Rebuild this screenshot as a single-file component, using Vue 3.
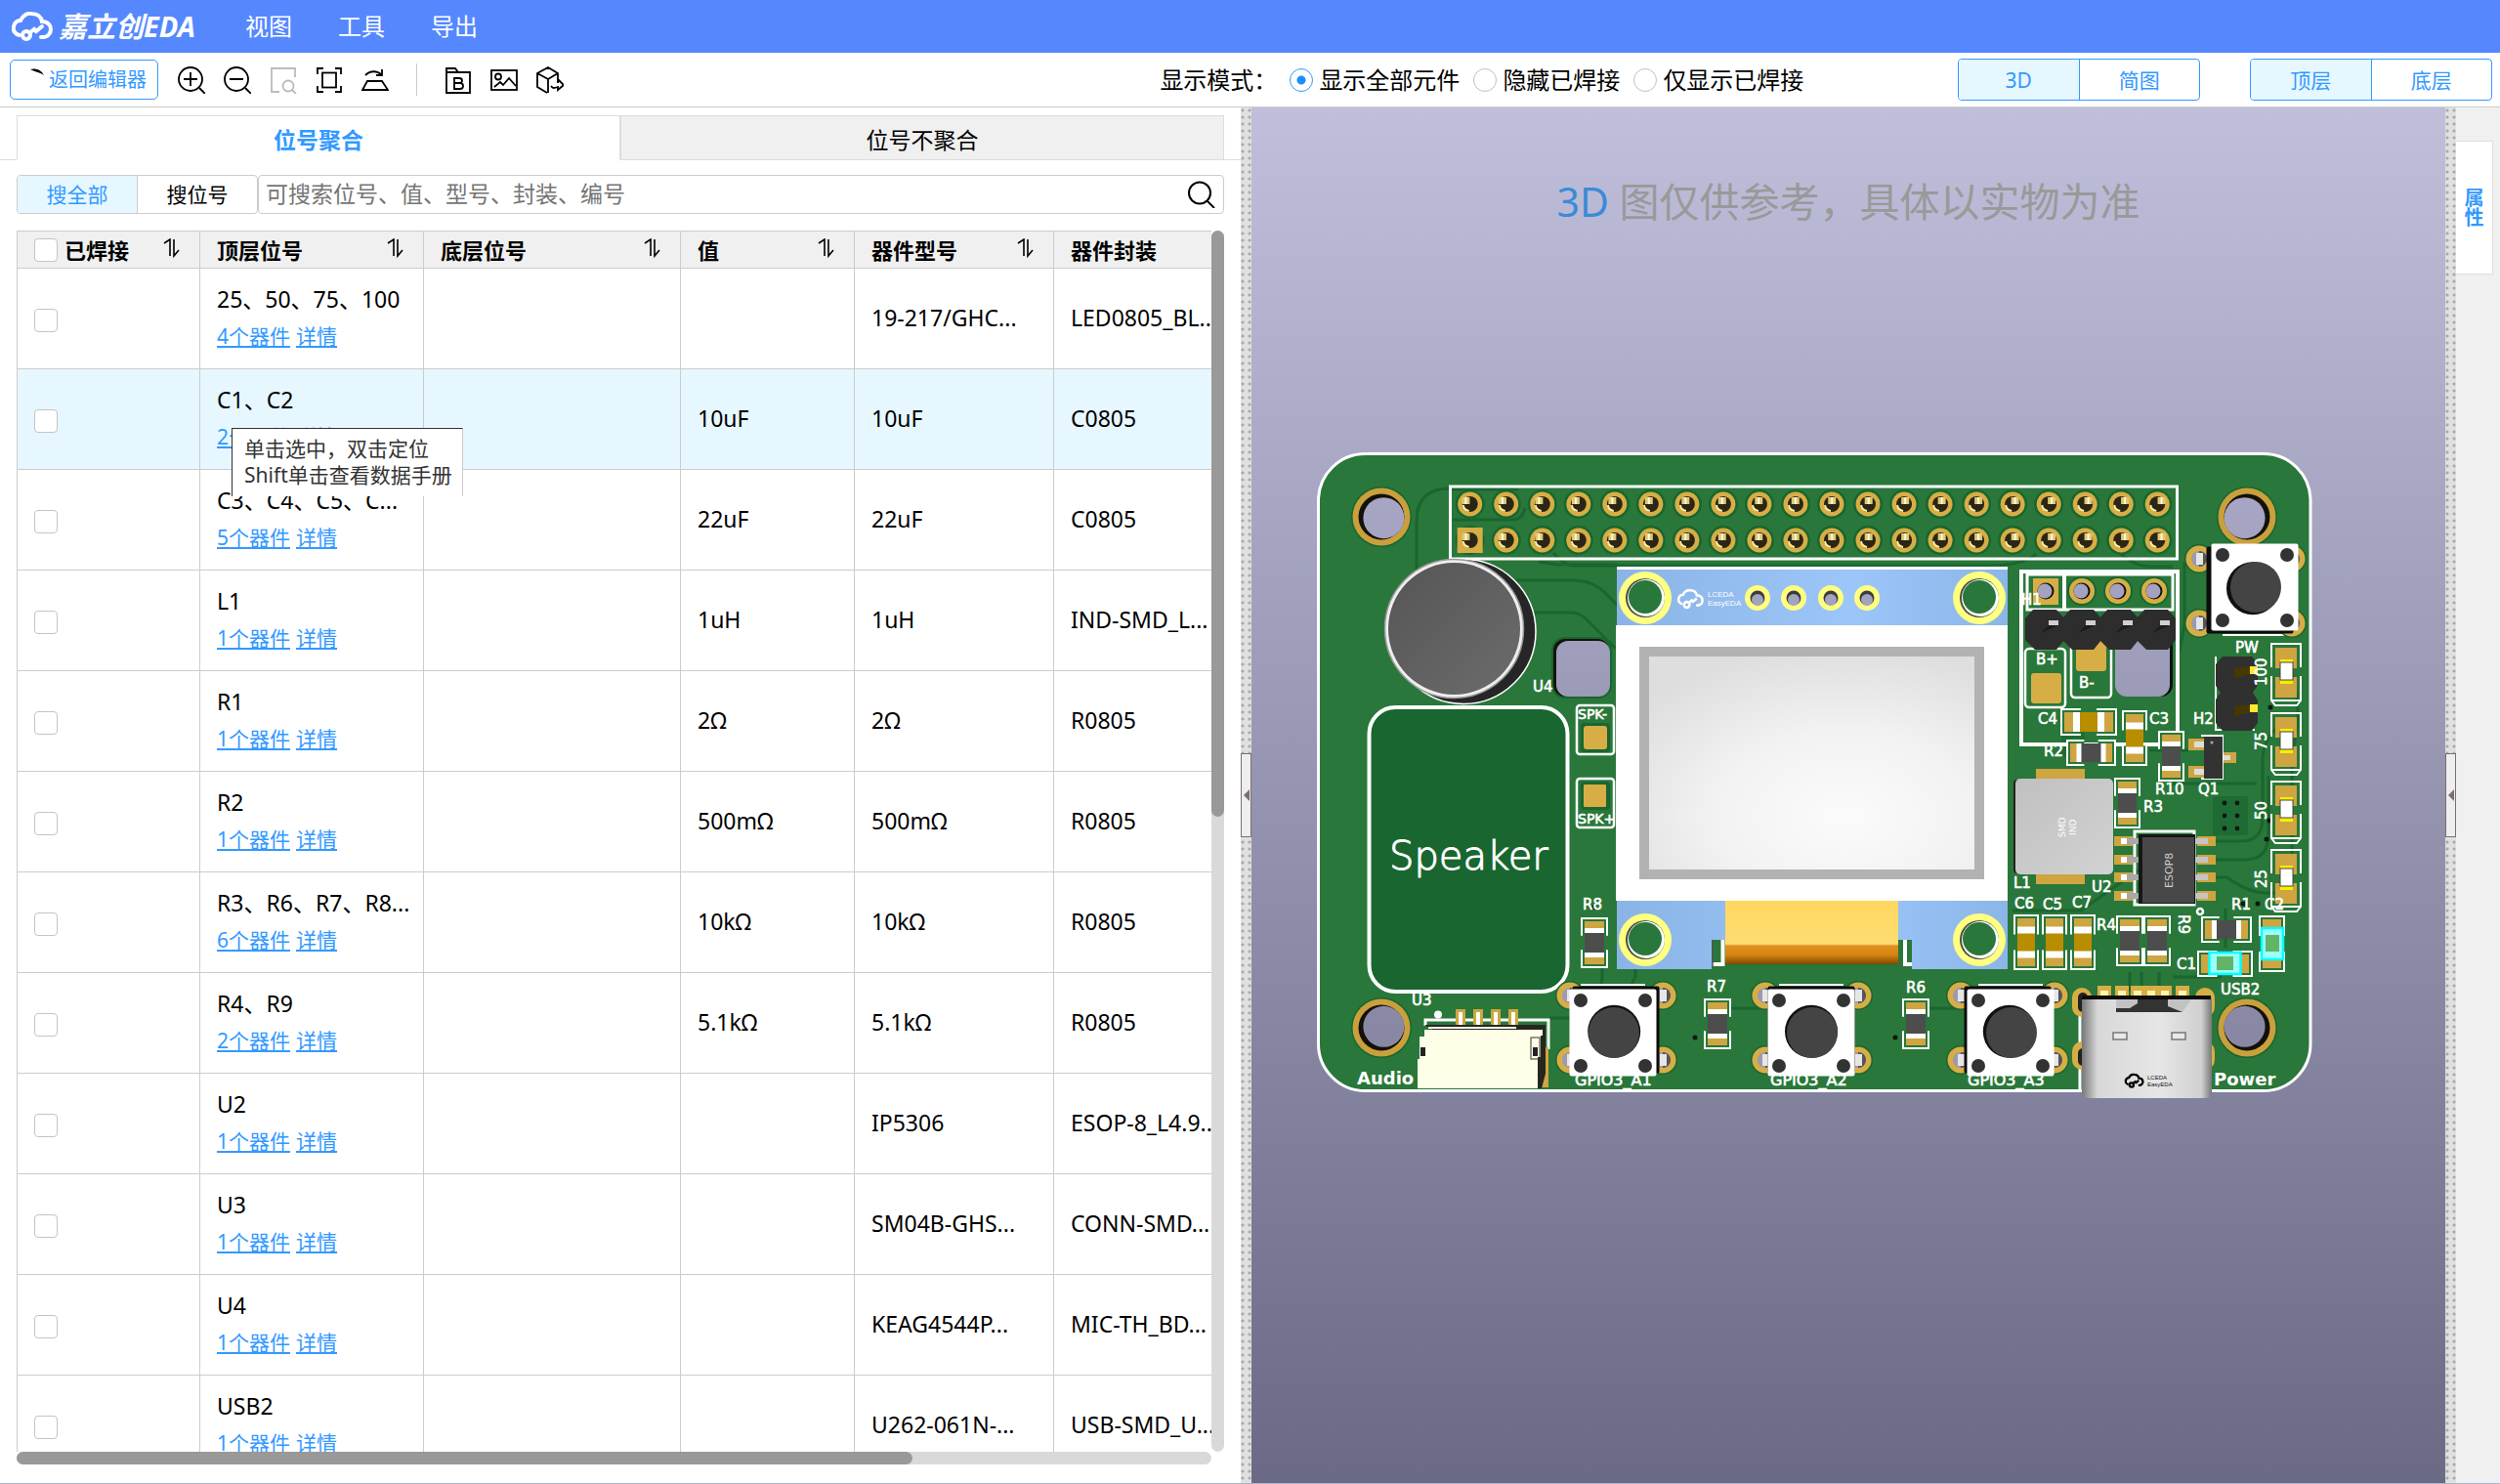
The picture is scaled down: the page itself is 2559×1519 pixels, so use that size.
<script setup>
import { ref } from 'vue'

const mode = ref('all')
const keyword = ref('')

const rows = [
  { top: '25、50、75、100', n: 4, val: '', part: '19-217/GHC...', pkg: 'LED0805_BL...' },
  { top: 'C1、C2', n: 2, val: '10uF', part: '10uF', pkg: 'C0805', active: true },
  { top: 'C3、C4、C5、C...', n: 5, val: '22uF', part: '22uF', pkg: 'C0805' },
  { top: 'L1', n: 1, val: '1uH', part: '1uH', pkg: 'IND-SMD_L...' },
  { top: 'R1', n: 1, val: '2Ω', part: '2Ω', pkg: 'R0805' },
  { top: 'R2', n: 1, val: '500mΩ', part: '500mΩ', pkg: 'R0805' },
  { top: 'R3、R6、R7、R8...', n: 6, val: '10kΩ', part: '10kΩ', pkg: 'R0805' },
  { top: 'R4、R9', n: 2, val: '5.1kΩ', part: '5.1kΩ', pkg: 'R0805' },
  { top: 'U2', n: 1, val: '', part: 'IP5306', pkg: 'ESOP-8_L4.9...' },
  { top: 'U3', n: 1, val: '', part: 'SM04B-GHS...', pkg: 'CONN-SMD...' },
  { top: 'U4', n: 1, val: '', part: 'KEAG4544P...', pkg: 'MIC-TH_BD...' },
  { top: 'USB2', n: 1, val: '', part: 'U262-061N-...', pkg: 'USB-SMD_U...' },
]

const columns = ['顶层位号', '底层位号', '值', '器件型号', '器件封装']

// Board geometry
const pins = []
for (let i = 0; i < 20; i++) {
  const x = 1504.7 + i * 37.03
  const hx = (i - 9.5) * 0.45
  pins.push({ x, y: 516, hx, square: false }, { x, y: 553, hx, square: i === 0 })
}
const mounts = [
  { x: 1414, y: 529, dx: 3, dy: 3 },
  { x: 2300, y: 529, dx: -3, dy: 3 },
  { x: 1414, y: 1052, dx: 3, dy: -3 },
  { x: 2300, y: 1052, dx: -3, dy: -3 },
]
const oledRings = [
  { x: 1684, y: 612 },
  { x: 2026, y: 612 },
  { x: 1684, y: 962 },
  { x: 2026, y: 962 },
]
// Two-terminal parts: outline box and kind (c: capacitor, r: resistor, s: selected)
const chips = [
  { x: 2109, y: 725, w: 58, h: 28, k: 'c' },
  { x: 2172, y: 727, w: 26, h: 57, k: 'c' },
  { x: 2115, y: 757, w: 51, h: 27, k: 'r' },
  { x: 2209, y: 748, w: 27, h: 52, k: 'r' },
  { x: 2164, y: 796, w: 27, h: 52, k: 'r' },
  { x: 2061, y: 936, w: 26, h: 57, k: 'c' },
  { x: 2090, y: 936, w: 26, h: 57, k: 'c' },
  { x: 2119, y: 936, w: 26, h: 57, k: 'c' },
  { x: 2166, y: 937, w: 28, h: 52, k: 'r' },
  { x: 2194, y: 937, w: 28, h: 52, k: 'r' },
  { x: 2253, y: 938, w: 52, h: 27, k: 'r' },
  { x: 2312, y: 937, w: 27, h: 58, k: 's' },
  { x: 2249, y: 973, w: 57, h: 27, k: 's' },
  { x: 1618, y: 939, w: 28, h: 52, k: 'r' },
  { x: 1744, y: 1022, w: 28, h: 52, k: 'r' },
  { x: 1947, y: 1022, w: 28, h: 52, k: 'r' },
].map((c) => {
  const v = c.h > c.w
  const L = v ? c.h : c.w
  const W = v ? c.w : c.h
  const b = c.k === 'r' ? 30 : 32
  return { ...c, v, L, W, b, m: (L - b) / 2, t: c.k === 'r' ? 5 : 7 }
})
const leds = [658, 729, 799, 869]
const switches = [
  { x: 2308, y: 601, sx: -5, sy: 3, px: [-57, 38], py: [-29, 37] },
  { x: 1651, y: 1057, sx: 3, sy: -3, px: [-44, 51], py: [-38, 28] },
  { x: 1854, y: 1057, sx: 0, sy: -3, px: [-47, 48], py: [-38, 28] },
  { x: 2058, y: 1057, sx: -3, sy: -3, px: [-51, 45], py: [-38, 28] },
]
const labels = [
  [1569, 708, 'U4'], [2069, 619, 'H1'],
  [2084, 680, 'B+'], [2128, 704, 'B-'], [2288, 668, 'PW'], [2086, 741, 'C4'],
  [2200, 741, 'C3'], [2092, 774, 'R2'], [2245, 741, 'H2'], [2206, 813, 'R10'],
  [2250, 813, 'Q1'], [2061, 909, 'L1'], [2141, 913, 'U2'], [2194, 831, 'R3'],
  [2062, 930, 'C6'], [2091, 931, 'C5'], [2121, 929, 'C7'], [2146, 952, 'R4'],
  [2284, 931, 'R1'], [2318, 931, 'C2'], [2228, 992, 'C1'], [2273, 1018, 'USB2'],
  [1620, 931, 'R8'], [1747, 1015, 'R7'], [1951, 1016, 'R6'], [1445, 1029, 'U3'],
]
const turned = [[2320, 702, '100'], [2320, 768, '75'], [2320, 839, '50'], [2320, 909, '25']]
const usbPads = [2154, 2172, 2188, 2202, 2216, 2234]
</script>

<template>
  <div class="app">
    <header class="topbar">
      <div class="brand">
        <svg class="cloud" viewBox="0 0 42 30" fill="none" stroke="#fff" stroke-width="4" stroke-linecap="round">
          <path d="M8 24C3 23 1 19 2 15c1-4 4-6 7-6 2-5 7-8 12-7 5 0 9 3 10 8 6 0 9 4 9 8s-3 8-8 8h-2" />
          <circle cx="15" cy="24" r="4" />
          <path d="M19 21l4-3 2 2 6-5" />
        </svg>
        <span class="brand-name">嘉立创EDA</span>
      </div>
      <nav class="menu">
        <a href="#view">视图</a>
        <a href="#tools">工具</a>
        <a href="#export">导出</a>
      </nav>
    </header>

    <div class="toolbar">
      <button class="back">
        <svg viewBox="0 0 14 8"><path d="M0 1C5-.500 11 1 14 7 9 3.500 4 3.500 0 1z" /></svg>
        <span>返回编辑器</span>
      </button>
      <div class="tools">
        <button aria-label="放大"><svg viewBox="0 0 28 28"><circle cx="13" cy="13" r="12" /><path d="M22 22l6 6M6 13h14M13 6v14" /></svg></button>
        <button aria-label="缩小"><svg viewBox="0 0 28 28"><circle cx="13" cy="13" r="12" /><path d="M22 22l6 6M6 13h14" /></svg></button>
        <button aria-label="框选" class="off"><svg viewBox="0 0 28 28"><path d="M10 26H2V2h24v9" /><circle cx="19" cy="20" r="5.500" /><path d="M23 24l4 4" /></svg></button>
        <button aria-label="适应窗口"><svg viewBox="0 0 28 28"><path d="M2 8V2h6M20 2h6v6M26 20v6h-6M8 26H2v-6" /><rect x="7" y="6.500" width="14" height="15" /></svg></button>
        <button aria-label="翻转"><svg viewBox="0 0 28 28"><path d="M6 15h15l6 9H1zM4 9c5-5 12-5 17 0M21 3v6h-6" /></svg></button>
      </div>
      <span class="rule"></span>
      <div class="tools">
        <button aria-label="导出BOM"><svg viewBox="0 0 28 28"><path d="M2 27V2h9l3 4h12v21zM2 6h12M10 12h5c4 0 4 5 0 5h-5zM10 17h6c4 0 4 6 0 6h-6z" /></svg></button>
        <button aria-label="导出图片"><svg viewBox="0 0 28 28"><rect x="1" y="4" width="26" height="20" /><circle cx="8" cy="10.500" r="3" /><path d="M4 21l6-5 3 3 6-7 7 8" /></svg></button>
        <button aria-label="导出3D"><svg viewBox="0 0 28 28"><path d="M11 27L1 21V7l11-6 10 6v6M1 7l11 6v14M12 13l10-6M15 20c2 3 4 2 7 1v3l6-5-6-6v4" /></svg></button>
      </div>

      <div class="modes">
        <span class="modes-title">显示模式：</span>
        <label><input v-model="mode" type="radio" name="mode" value="all" />显示全部元件</label>
        <label><input v-model="mode" type="radio" name="mode" value="hide" />隐藏已焊接</label>
        <label><input v-model="mode" type="radio" name="mode" value="only" />仅显示已焊接</label>
      </div>

      <div class="switchers">
        <div class="seg"><button class="on">3D</button><button>简图</button></div>
        <div class="seg"><button class="on">顶层</button><button>底层</button></div>
      </div>
    </div>

    <main class="body">
      <section class="left">
        <div class="tabs">
          <button class="tab on">位号聚合</button>
          <button class="tab">位号不聚合</button>
        </div>
        <div class="search">
          <div class="scope"><button class="on">搜全部</button><button>搜位号</button></div>
          <div class="field">
            <input v-model="keyword" type="text" aria-label="搜索" placeholder="可搜索位号、值、型号、封装、编号" />
            <svg viewBox="0 0 28 28"><circle cx="12" cy="12.500" r="11" /><path d="M20 21l7 7" /></svg>
          </div>
        </div>

        <div class="grid">
          <div class="viewport">
            <table>
              <colgroup><col class="c1" /><col class="c2" /><col class="c3" /><col class="c4" /><col class="c5" /><col class="c6" /></colgroup>
              <thead>
                <tr>
                  <th>
                    <div class="head">
                      <label><input type="checkbox" />已焊接</label>
                      <svg class="sort" viewBox="0 0 17 20"><path d="M1 5l6-4v17M11 1v17l5-6" /></svg>
                    </div>
                  </th>
                  <th v-for="c in columns" :key="c">
                    <div class="head">
                      <span>{{ c }}</span>
                      <svg class="sort" viewBox="0 0 17 20"><path d="M1 5l6-4v17M11 1v17l5-6" /></svg>
                    </div>
                  </th>
                </tr>
              </thead>
              <tbody>
                <tr v-for="r in rows" :key="r.top" :class="{ active: r.active }">
                  <td class="pick"><input type="checkbox" :aria-label="r.top" /></td>
                  <td>
                    <div class="names">{{ r.top }}</div>
                    <div class="links"><a href="#parts">{{ r.n }}个器件</a><a href="#detail">详情</a></div>
                    <div v-if="r.active" class="tip">单击选中，双击定位<br />Shift单击查看数据手册</div>
                  </td>
                  <td></td>
                  <td>{{ r.val }}</td>
                  <td>{{ r.part }}</td>
                  <td>{{ r.pkg }}</td>
                </tr>
              </tbody>
            </table>
          </div>
          <div class="vbar"><i></i></div>
          <div class="hbar"><i></i></div>
        </div>
      </section>

      <div class="splitter"><button aria-label="收起左侧"></button></div>

      <section class="canvas">
        <p class="notice"><b>3D</b> 图仅供参考，具体以实物为准</p>
        <svg class="board" viewBox="1281 110 1222 1408">
          <defs>
            <radialGradient id="screen" cx=".6" cy=".75" r=".8"><stop offset="0" stop-color="#fbfbfb" /><stop offset=".5" stop-color="#f2f2f2" /><stop offset="1" stop-color="#dedede" /></radialGradient>
            <linearGradient id="blue" x1="0" y1="0" x2="1" y2="0"><stop offset="0" stop-color="#8bb4e6" /><stop offset=".6" stop-color="#9cc6f9" /><stop offset="1" stop-color="#8cb5e8" /></linearGradient>
            <linearGradient id="flex" x1="0" y1="0" x2="0" y2="1"><stop offset="0" stop-color="#ffd860" /><stop offset=".68" stop-color="#ffdc70" /><stop offset=".71" stop-color="#e09020" /><stop offset=".85" stop-color="#d48412" /><stop offset="1" stop-color="#804a00" /></linearGradient>
            <linearGradient id="mic" x1="0" y1="0" x2="1" y2="1"><stop offset="0" stop-color="#555" /><stop offset="1" stop-color="#6c6c6c" /></linearGradient>
            <linearGradient id="metal" x1="0" y1="0" x2="1" y2="0"><stop offset="0" stop-color="#777" /><stop offset=".12" stop-color="#d8d8d8" /><stop offset=".6" stop-color="#e6e6e6" /><stop offset=".92" stop-color="#d0d0d0" /><stop offset="1" stop-color="#777" /></linearGradient>
            <linearGradient id="coil" x1="0" y1="0" x2="1" y2="1"><stop offset="0" stop-color="#c0c0c0" /><stop offset="1" stop-color="#d2d2d2" /></linearGradient>
            <linearGradient id="hole" gradientUnits="userSpaceOnUse" x1="0" y1="463" x2="0" y2="1118"><stop offset="0" stop-color="#a9a8c6" /><stop offset="1" stop-color="#8685a1" /></linearGradient>
          </defs>

          <rect x="1349.500" y="464.500" width="1015.500" height="652" rx="48" fill="#29773a" stroke="#fff" stroke-width="3" />

          <g fill="none" stroke="#19662f" stroke-width="3">
            <path d="M1450 588v-55q0-33 34-33M1550 594h60q22 0 36 16l14 14M1570 627h38q10 0 18 9l28 28M1484 501h70M1487 532h60q12 0 14-12" />
            <path d="M1575 575l20 3h60M1590 566q12 14 22 13h420q40 0 52-12M2170 566q14 14 34 14h20" />
            <path d="M1640 991v10q0 14-22 22M1674 991v8q-2 8-10 14M1586 1042h50M1772 1032h30M1975 1032h30" />
            <path d="M2236 575v65l-6 30v90M2240 640h70M2346 690q12 40 0 80v120q0 20-16 30" />
            <path d="M2268 861h26q22 0 22-24v-60q0-20 20-38M2268 880h30q24 0 24-26v-60M2268 898h12q20 16 40 16h20M2278 930v40M2060 932h70l60-42" />
            <path d="M2220 790v12h90M2200 768h40M2180 995v20M2210 995v20M2192 995v20M2224 1000h50" />
          </g>
          <g fill="#1e6c34">
            <rect x="2265" y="815" width="36" height="40" />
            <rect x="2110" y="745" width="24" height="30" />
          </g>
          <g fill="#101810">
            <template v-for="vx in [2277, 2290]" :key="vx"><circle v-for="vy in [822, 835, 848]" :key="vy" :cx="vx" :cy="vy" r="2.400" /></template>
            <circle cx="2324" cy="724" r="2.500" /><circle cx="2323" cy="840" r="2.500" /><circle cx="2320" cy="859" r="2.500" />
            <circle cx="2296" cy="925" r="2.500" /><circle cx="2311" cy="925" r="2.500" /><circle cx="1631" cy="929" r="2.500" />
            <circle cx="1735" cy="1062" r="2.500" /><circle cx="1940" cy="1062" r="2.500" />
          </g>

          <g v-for="m in mounts" :key="m.x + '-' + m.y">
            <circle :cx="m.x" :cy="m.y" r="31" fill="#19662f" />
            <circle :cx="m.x" :cy="m.y" r="29.500" fill="#c9a03c" />
            <circle :cx="m.x" :cy="m.y" r="23.500" fill="#14110a" />
            <circle :cx="m.x + m.dx * .8" :cy="m.y + m.dy * .4" r="21" fill="url(#hole)" />
          </g>

          <rect x="1484.500" y="498" width="744" height="74" fill="none" stroke="#fff" stroke-width="3" />
          <g v-for="p in pins" :key="p.x + '-' + p.y" :transform="`translate(${p.x} ${p.y})`">
            <circle r="15" fill="#19662f" />
            <rect v-if="p.square" x="-13" y="-13" width="26" height="26" fill="#d7ae45" />
            <circle v-else r="12.500" fill="#d7ae45" />
            <circle r="8" fill="#2b2516" />
            <path d="M-7 1a7 7 0 0 0 6 6" stroke="#ffeFA0" stroke-width="2" fill="none" />
            <rect :x="p.hx - 4" y="-7" width="8" height="7" fill="#dcc878" />
            <rect :x="p.hx - 1" y="-7" width="2" height="7" fill="#fff8d0" />
          </g>

          <circle cx="1498" cy="646.500" r="74" fill="#262626" stroke="#fff" stroke-width="1.500" />
          <circle cx="1488.500" cy="643.500" r="71" fill="#eee" stroke="#999" stroke-width="1.500" />
          <circle cx="1488.500" cy="643.500" r="67.500" fill="url(#mic)" />

          <rect x="1588" y="652" width="62" height="63" rx="14" fill="#19662f" />
          <rect x="1590" y="654" width="57" height="59" rx="12" fill="#14140f" />
          <rect x="1593" y="656" width="55" height="57" rx="12" fill="url(#hole)" />

          <rect x="1401.500" y="724" width="203" height="291" rx="27" fill="#196630" stroke="#fff" stroke-width="4" />
          <text x="1422" y="890" class="big">Speaker</text>
          <g fill="none" stroke="#fff" stroke-width="2.500">
            <rect x="1614" y="722" width="38" height="50" rx="3" />
            <rect x="1614" y="797" width="38" height="50" rx="3" />
          </g>
          <rect x="1618" y="740" width="30" height="30" rx="4" fill="#19662f" /><rect x="1618" y="800" width="30" height="29" rx="4" fill="#19662f" />
          <rect x="1621" y="743" width="24" height="24" rx="3" fill="#d7ae45" /><rect x="1621" y="803" width="23" height="23" rx="1" fill="#d7ae45" />
          <text x="1615" y="736" class="spk">SPK-</text><text x="1615" y="843" class="spk">SPK+</text>

          <!-- display module -->
          <rect x="1655" y="580" width="400" height="60" fill="#fff" />
          <rect x="1655" y="583" width="400" height="57" fill="url(#blue)" />
          <rect x="1655" y="922" width="400" height="70" fill="url(#blue)" />
          <rect x="1654" y="640" width="401" height="282" fill="#fff" />
          <rect x="1678" y="662" width="353" height="238" fill="#b2b2b2" />
          <rect x="1688" y="672" width="333" height="218" fill="url(#screen)" />
          <rect x="1752" y="962" width="205" height="31" fill="#29773a" />
          <path d="M1763.500 962v25h-11M1950 962v25h7" fill="none" stroke="#fff" stroke-width="4" />
          <path d="M1753 962v28" stroke="#555" stroke-width="1.500" />
          <rect x="1766" y="922" width="177" height="65" fill="url(#flex)" />
          <g v-for="o in oledRings" :key="o.x + '-' + o.y">
            <circle :cx="o.x" :cy="o.y" r="27" fill="#ffff80" />
            <circle :cx="o.x" :cy="o.y" r="20" fill="#4a4a40" />
            <circle :cx="o.x + 1" :cy="o.y" r="19" fill="#fff" />
            <circle :cx="o.x" :cy="o.y - 1" r="17" fill="#29773a" />
          </g>
          <g v-for="sx in [1799, 1836, 1874, 1911]" :key="sx">
            <circle :cx="sx" cy="612" r="13" fill="#ffff80" /><circle :cx="sx" cy="612" r="7.500" fill="#3c3c3c" /><circle :cx="sx" cy="614" r="6" fill="#a3a2c0" />
          </g>
          <g transform="translate(1717 603) scale(.64)" fill="none" stroke="#fff" stroke-width="4">
            <path d="M8 24C3 23 1 19 2 15c1-4 4-6 7-6 2-5 7-8 12-7 5 0 9 3 10 8 6 0 9 4 9 8s-3 8-8 8h-2" /><circle cx="15" cy="25" r="4.500" /><path d="M19 21l4-3 2 2 6-5" />
          </g>
          <text x="1748" y="611" class="tiny">LCEDA</text><text x="1748" y="620" class="tiny">EasyEDA</text>

          <!-- H1 area -->
          <g fill="none" stroke="#fff">
            <rect x="2069" y="585" width="160" height="177" stroke-width="4" />
            <rect x="2075" y="588" width="149" height="36" stroke-width="3" /><path d="M2113 586v38" stroke-width="4" />
            <rect x="2073" y="664" width="41" height="60" rx="4" stroke-width="2.500" /><rect x="2120" y="660" width="41" height="54" rx="4" stroke-width="2.500" />
          </g>
          <rect x="2081" y="592" width="26" height="27" fill="#d7ae45" />
          <g v-for="(hx, i) in [2094, 2131, 2168, 2205]" :key="hx">
            <circle v-if="i" :cx="hx" cy="605" r="15" fill="#19662f" /><circle v-if="i" :cx="hx" cy="605" r="13" fill="#d7ae45" />
            <circle :cx="hx" cy="605" r="8.500" fill="#111" /><circle :cx="hx - 1" cy="605" r="7.500" fill="#a3a2c0" />
          </g>
          <rect x="2079" y="689" width="31" height="31" rx="3" fill="#d7ae45" /><rect x="2125" y="655" width="31" height="32" rx="3" fill="#d7ae45" />
          <rect x="2167" y="650" width="57" height="63" rx="12" fill="#111" /><rect x="2165" y="650" width="56" height="63" rx="12" fill="url(#hole)" />
          <g v-for="hx in [2073, 2111, 2149, 2187]" :key="hx">
            <path :d="`M${hx + 8} 624h24l8 9v22l-8 10h-22l-10-10v-22z`" fill="#2d2d2d" />
            <path :d="`M${hx + 24} 640h10l-18 8z`" fill="#1c1c1c" /><rect :x="hx + 24" y="635" width="10" height="5" fill="#d0d0d0" />
          </g>
          <path d="M2268 672v75h40" fill="none" stroke="#fff" stroke-width="2" />
          <path d="M2275 672h30l6 7v22l-5 8 5 8v23l-6 8h-30l-7-8v-24l5-7-5-7v-22z" fill="#303030" />
          <path d="M2287 684l16-2v8l-16 4zM2287 723l16-2v8l-16 4z" fill="#463800" /><path d="M2303 682h8v8h-8zM2303 721h8v8h-8z" fill="#ffe92e" />

          <g v-for="ly in leds" :key="ly" :transform="`translate(2324 ${ly})`">
            <path d="M1 25V1h30v24M1 34v25l4 5h22l4-5V34M1 59h30" fill="none" stroke="#fff" stroke-width="2" />
            <rect x="5" y="5" width="22" height="21" fill="#cfa541" /><rect x="5" y="35" width="22" height="21" fill="#cfa541" />
            <rect x="10" y="17" width="13" height="25" fill="#f8ee00" /><rect x="10" y="20" width="13" height="18" fill="#fff" stroke="#444" />
          </g>

          <!-- coil -->
          <rect x="2084" y="787" width="50" height="118" fill="#cfa541" />
          <rect x="2061" y="798" width="20" height="96" rx="4" fill="#222" /><rect x="2063" y="797" width="100" height="98" rx="5" fill="url(#coil)" />
          <text transform="translate(2114 857) rotate(-90)" class="etch">SMD</text><text transform="translate(2125 855) rotate(-90)" class="etch">IND</text>

          <!-- capacitors and resistors -->
          <g v-for="(c, i) in chips" :key="i" :transform="c.v ? `translate(${c.x} ${c.y})` : `translate(${c.x} ${c.y + c.h}) rotate(-90)`">
            <path :d="`M1 ${c.L * .36}V1H${c.W - 1}V${c.L * .36}M1 ${c.L * .64}V${c.L - 1}H${c.W - 1}V${c.L * .64}`" fill="#29773a" stroke="#fff" stroke-width="2" />
            <rect x="4" y="4" :width="c.W - 8" :height="c.L * .34" fill="#cfa541" /><rect x="4" :y="c.L * .66 - 4" :width="c.W - 8" :height="c.L * .34" fill="#cfa541" />
            <rect x="4" :y="c.m" :width="c.W - 8" :height="c.b" fill="#fff" />
            <rect x="4" :y="c.m + c.t" :width="c.W - 8" :height="c.b - 2 * c.t" :fill="c.k === 'r' ? '#4d4d4d' : '#b88d00'" />
            <g v-if="c.k === 's'">
              <rect x="3" :y="c.m" :width="c.W - 5" :height="c.b" fill="#9ff" stroke="#0ff" stroke-width="2.500" /><rect x="7" y="20" :width="c.W - 13" height="17" fill="#62b566" />
            </g>
          </g>

          <!-- Q1, U2 -->
          <path d="M2240 756h16v12h-16zM2240 784h16v12h-16zM2275 770h14v11h-14z" fill="#cfa541" />
          <path d="M2246 759h10v6h-10zM2246 787h10v6h-10zM2275 773h8v5h-8z" fill="#ddd" />
          <path d="M2253 753h22v44h-22" fill="none" stroke="#fff" stroke-width="2" /><rect x="2256" y="754" width="19" height="43" fill="#333" /><circle cx="2264" cy="760" r="1.500" fill="#aaa" />
          <rect x="2185" y="851" width="61" height="75" fill="none" stroke="#fff" stroke-width="3" />
          <g v-for="uy in [861, 880, 898, 917]" :key="uy">
            <rect x="2164" :y="uy - 5" width="19" height="10" fill="#cfa541" /><rect x="2249" :y="uy - 5" width="19" height="10" fill="#cfa541" />
            <rect x="2171" :y="uy - 3" width="18" height="6" fill="#a8a8a8" /><rect x="2171" :y="uy - 3" width="6" height="6" fill="#fff" /><rect x="2246" :y="uy - 3" width="14" height="6" fill="#c4c4c4" />
          </g>
          <rect x="2189" y="854" width="58" height="71" fill="#161616" /><rect x="2193" y="857" width="53" height="67" fill="#484848" />
          <text transform="translate(2224 909) rotate(-90)" class="chip">ESOP8</text>

          <!-- audio connector -->
          <path d="M1459 1050v-6h126v30" fill="none" stroke="#fff" stroke-width="3" /><circle cx="1472" cy="1038.500" r="4" fill="#fff" />
          <g v-for="ax in [1490, 1508, 1526, 1544]" :key="ax"><rect :x="ax" y="1033" width="10" height="18" fill="#cfa541" /><rect :x="ax + 3" y="1036" width="4" height="15" fill="#fff" /></g>
          <rect x="1578" y="1072" width="7" height="41" fill="#cfa541" />
          <path d="M1458 1049h124v50l-4 15h-8z" fill="#26261e" />
          <path d="M1458 1054h121v6h-2v22h-3v32h-123v-30h2v-23h5z" fill="#ffffe8" />
          <path d="M1462 1052h90" stroke="#fffff0" stroke-width="2" /><path d="M1454 1072h5v9h-5zM1569 1072h5v9h-5z" fill="#222" /><rect x="1567" y="1062" width="9" height="22" fill="none" stroke="#333" />

          <text v-for="g in [[1612, 'A1'], [1812, 'A2'], [2014, 'A3']]" :key="g[1]" :x="g[0]" y="1111" class="gpio">GPIO3_{{ g[1] }}</text>

          <!-- push buttons -->
          <g v-for="s in switches" :key="s.x" :transform="`translate(${s.x} ${s.y})`">
            <path :d="`M-33 ${s.y > 800 ? -49 : 49}h66`" stroke="#fff" stroke-width="2" />
            <g v-for="cx in s.px" :key="cx">
              <g v-for="cy in s.py" :key="cy">
                <circle :cx="cx" :cy="cy" r="15" fill="#19662f" /><circle :cx="cx" :cy="cy" r="13.500" fill="#d7ae45" /><circle :cx="cx" :cy="cy" r="8" fill="#9b9aae" /><path :d="`M${cx} ${cy - 8}a8 8 0 0 1 0 16z`" fill="#555" /><rect :x="cx - 3" :y="cy - 6" width="7" height="12" fill="#e6e6e6" />
              </g>
            </g>
            <rect :x="-44.500 + s.sx" :y="-44.500 + s.sy" width="89" height="89" rx="2" fill="#0c0c0c" />
            <rect x="-44.500" y="-44.500" width="89" height="89" rx="2" fill="#fff" />
            <circle :cx="s.sx * .4" :cy="s.sy * .4" r="27" fill="#111" /><circle cx="1" cy="0" r="26" fill="#444" />
            <circle cx="-33" cy="-33" r="7" fill="#333" /><circle cx="33" cy="-33" r="7" fill="#333" /><circle cx="-33" cy="34" r="7" fill="#333" /><circle cx="33" cy="34" r="7" fill="#333" />
          </g>

          <!-- usb -->
          <path d="M2129 1040v75" stroke="#fff" stroke-width="3" />
          <g fill="#d7ae45"><rect x="2121" y="1011" width="20" height="30" rx="10" /><rect x="2121" y="1066" width="20" height="29" rx="10" /><rect x="2247" y="1011" width="20" height="30" rx="10" /><rect x="2247" y="1066" width="20" height="29" rx="10" /></g>
          <g fill="#222"><rect x="2127" y="1016" width="10" height="20" rx="5" /><rect x="2127" y="1073" width="10" height="18" rx="5" /></g>
          <g v-for="ux in usbPads" :key="ux"><rect :x="ux - 7" y="1009" width="14" height="12" fill="#d7ae45" /><rect :x="ux - 4" y="1014" width="8" height="6" fill="#fff4b0" /></g>
          <rect x="2131" y="1019" width="133" height="105" rx="5" fill="url(#metal)" />
          <path d="M2131 1019h132v4h-132z" fill="#0c0c0c" /><path d="M2166 1023h68v13h-68z" fill="#333" /><path d="M2166 1023h22v4l-8 5h-14zM2219 1023h24l-9 13-15-6z" fill="#c2c2c2" />
          <path d="M2163 1057h14v7h-14zM2223 1057h14v7h-14z" fill="#e8e8e8" stroke="#777" stroke-width="1.500" />
          <g transform="translate(2175 1099) scale(.46)" fill="none" stroke="#000" stroke-width="5">
            <path d="M8 24C3 23 1 19 2 15c1-4 4-6 7-6 2-5 7-8 12-7 5 0 9 3 10 8 6 0 9 4 9 8s-3 8-8 8h-2" /><circle cx="15" cy="25" r="4.500" /><path d="M19 21l4-3 2 2 6-5" />
          </g>
          <text x="2198" y="1105" class="tiny ink">LCEDA</text><text x="2198" y="1112" class="tiny ink">EasyEDA</text>

          <circle cx="2252" cy="933" r="3" fill="none" stroke="#fff" stroke-width="2.500" />
          <text v-for="l in labels" :key="l[2]" :x="l[0]" :y="l[1]" class="silk">{{ l[2] }}</text>
          <text v-for="l in turned" :key="l[2]" :transform="`translate(${l[0]} ${l[1]}) rotate(-90)`" class="silk">{{ l[2] }}</text>
          <text transform="translate(2230 936) rotate(90)" class="silk">R9</text>
          <text x="1389" y="1110" class="port">Audio</text><text x="2266" y="1111" class="port">Power</text>
        </svg>
      </section>

      <div class="splitter"><button aria-label="展开右侧"></button></div>
      <aside class="side"><button>属性</button></aside>
    </main>
  </div>
</template>

<style>
html,
body {
  margin: 0;
  overflow: hidden;
}
</style>

<style scoped>
* {
  box-sizing: border-box;
}
.app {
  height: 100vh;
  display: flex;
  flex-direction: column;
  background: #fff;
  border-bottom: 1px solid #b0b4c8;
  color: #000;
  font: 22px/28px 'Noto Sans', 'Noto Sans CJK SC', sans-serif;
}
button,
input {
  font: inherit;
  color: inherit;
}
button {
  padding: 0;
  border: 0;
  background: none;
}
svg {
  display: block;
}
.topbar {
  display: flex;
  align-items: center;
  height: 54px;
  flex: none;
  padding-left: 12px;
  background: #58f;
  color: #fff;
}
.brand {
  display: flex;
  align-items: center;
  gap: 6px;
  width: 239px;
}
.cloud {
  width: 42px;
  height: 30px;
}
.brand-name {
  font-size: 29px;
  font-weight: 700;
  font-style: italic;
}
.menu {
  display: flex;
  gap: 47px;
}
.menu a {
  font-size: 24px;
  color: inherit;
  text-decoration: none;
}
.toolbar {
  position: relative;
  display: flex;
  align-items: center;
  height: 56px;
  flex: none;
  padding: 0 8px 0 10px;
  border-bottom: 1px solid #ccc;
}
.back {
  display: flex;
  align-items: center;
  width: 152px;
  height: 41px;
  padding-left: 20px;
  gap: 5px;
  border: 1px solid #39f;
  border-radius: 5px;
  color: #39f;
  font-size: 20px;
  white-space: nowrap;
}
.back svg {
  width: 14px;
  height: 8px;
  flex: none;
  margin-bottom: 16px;
}
.tools {
  display: flex;
  gap: 19px;
  margin-left: 20px;
}
.tools svg {
  width: 28px;
  height: 28px;
  fill: none;
  stroke: #000;
  stroke-width: 1.8;
}
.off svg {
  stroke: #bbb;
}
.rule {
  width: 1px;
  height: 33px;
  margin: 0 8px 0 28px;
  background: #ccc;
}
.modes {
  position: absolute;
  left: 46.4%;
  top: 14px;
  display: flex;
  align-items: center;
  font-size: 24px;
}
.modes-title {
  margin-right: 13px;
}
.modes label {
  display: flex;
  align-items: center;
  gap: 6px;
  margin-right: 14px;
}
.modes input {
  appearance: none;
  width: 24px;
  height: 24px;
  margin: 0;
  border: 1px solid #c0c0c0;
  border-radius: 50%;
}
.modes input:checked {
  border-color: #39f;
  background: radial-gradient(circle, #1890ff 4px, transparent 5px);
}
.switchers {
  display: flex;
  gap: 51px;
  margin-left: auto;
}
.seg,
.scope {
  display: flex;
  width: 248px;
  height: 43px;
  border: 1px solid #39f;
  border-radius: 4px;
  color: #39f;
  font-size: 21px;
  overflow: hidden;
}
.seg button,
.scope button {
  flex: 1;
}
.seg .on,
.scope .on {
  background: #e6f7ff;
  border-right: 1px solid #39f;
}
.body {
  display: flex;
  flex: 1;
  min-height: 0;
}
.left {
  flex: 1270 1 0;
  min-width: 0;
  display: flex;
  flex-direction: column;
  padding-bottom: 19px;
}
.tabs {
  display: flex;
  height: 46px;
  margin-top: 8px;
  padding: 0 17px;
  flex: none;
  border-bottom: 1px solid #ddd;
}
.tab {
  flex: 1;
  height: 46px;
  padding-top: 3px;
  border: 1px solid #ddd;
  background: #f0f0f0;
  font-size: 23px;
}
.tab.on {
  border-bottom-color: #fff;
  background: #fff;
  color: #39f;
  font-weight: 700;
}
.search {
  display: flex;
  height: 40px;
  margin: 15px 17px 17px;
  flex: none;
}
.scope {
  width: 247px;
  height: 40px;
  border-color: #ccc;
  color: #000;
}
.scope .on {
  border-color: #ccc;
  color: #39f;
}
.field {
  flex: 1;
  display: flex;
  align-items: center;
  padding: 0 8px 0 7px;
  border: 1px solid #ccc;
  border-radius: 4px;
}
.field input {
  flex: 1;
  height: 36px;
  padding: 0 0 2px;
  border: 0;
  outline: 0;
  font-size: 23px;
}
.field input::placeholder {
  color: #757575;
}
.field svg {
  width: 28px;
  height: 28px;
  fill: none;
  stroke: #000;
  stroke-width: 2;
}
.grid {
  flex: 1;
  min-height: 0;
  margin: 0 17px;
  display: grid;
  grid-template: minmax(0, 1fr) 13px / minmax(0, 1fr) 13px;
}
.viewport {
  overflow: hidden;
  border: 1px solid #ccc;
  border-width: 1px 0 0 1px;
}
table {
  width: 1265px;
  table-layout: fixed;
  border-collapse: separate;
  border-spacing: 0;
}
.c1 {
  width: 187px;
}
.c2 {
  width: 229px;
}
.c3 {
  width: 263px;
}
.c4 {
  width: 178px;
}
.c5,
.c6 {
  width: 204px;
}
th,
td {
  padding: 0 0 0 17px;
  border: 1px solid #ccc;
  border-width: 0 1px 1px 0;
  text-align: left;
  white-space: nowrap;
}
th {
  height: 38px;
  background: #f0f0f0;
}
td {
  position: relative;
  height: 103px;
  padding-bottom: 2px;
  font-size: 23px;
}
.active td {
  background: #e6f7ff;
}
.head {
  display: flex;
  align-items: center;
  justify-content: space-between;
  padding-right: 20px;
}
.head label {
  display: flex;
  align-items: center;
  gap: 7px;
}
.sort {
  width: 17px;
  height: 20px;
  margin-bottom: 3px;
  fill: none;
  stroke: #000;
  stroke-width: 1.6;
}
input[type='checkbox'] {
  appearance: none;
  display: block;
  width: 24px;
  height: 24px;
  margin: 0;
  border: 1px solid #c4c4c4;
  border-radius: 4px;
  background: #fff;
}
.pick {
  padding-top: 5px;
}
.names {
  margin-bottom: 10px;
}
.links {
  display: flex;
  gap: 6px;
  font-size: 21px;
}
.links a {
  color: #39f;
}
.tip {
  position: absolute;
  z-index: 2;
  left: 32px;
  top: 60px;
  width: 237px;
  height: 70px;
  padding: 7px 0 0 12px;
  border: 1px solid #333;
  border-width: 1px 1px 0 1px;
  border-right-color: #ccc;
  background: #fff;
  color: #333;
  font-size: 21px;
  line-height: 27px;
}
.vbar,
.hbar {
  border-radius: 7px;
  background: #d9d9d9;
}
.vbar i,
.hbar i {
  display: block;
  border-radius: 7px;
  background: #999;
}
.vbar i {
  height: 48%;
}
.hbar i {
  width: 75%;
  height: 13px;
}
.splitter {
  width: 11px;
  flex: none;
  display: flex;
  align-items: center;
  background:
    radial-gradient(circle at 2px 3px, #aaa 1px, transparent 2px) 0 0 / 7px 7px,
    #e0e0e0;
}
.splitter button {
  width: 11px;
  height: 86px;
  border: 1px solid #7a6e6e;
  background: #eee;
}
.splitter button::before {
  content: '';
  display: block;
  width: 0;
  margin: auto;
  border: solid transparent;
  border-width: 6px 6px 6px 0;
  border-right-color: #7a6e6e;
}
.canvas {
  position: relative;
  flex: 1222 1 0;
  min-width: 0;
  background: linear-gradient(#bfbfdb, #6b6a86);
}
.board {
  width: 100%;
  height: 100%;
}
.notice {
  position: absolute;
  left: 0;
  right: 0;
  top: 66px;
  margin: 0;
  text-align: center;
  font-size: 41px;
  line-height: 60px;
  color: #999;
}
.notice b {
  font-weight: 400;
  color: #3c8ad8;
}
.side {
  width: 45px;
  flex: none;
  padding-top: 34px;
  background: #f0f0f0;
}
.side button {
  width: 38px;
  height: 137px;
  padding: 0 8px;
  border: 1px solid #ddd;
  border-left: 0;
  background: #fff;
  color: #39f;
  font-size: 20px;
  font-weight: 700;
  line-height: 20px;
}
.board text {
  fill: #fff;
  font-family: 'DejaVu Sans', sans-serif;
}
.board .big {
  font-size: 40px;
  font-weight: 200;
  stroke: #fff;
}
.board .silk {
  font-size: 15px;
  stroke: #fff;
  stroke-width: 0.6;
}
.board .spk {
  font-size: 14px;
  stroke: #fff;
  stroke-width: 0.6;
}
.board .gpio {
  font-size: 16px;
  stroke: #fff;
  stroke-width: 0.6;
}
.board .port {
  font-size: 18px;
  font-weight: 700;
}
.board .tiny {
  font-family: 'Liberation Sans', sans-serif;
  font-size: 8px;
}
.board .ink {
  fill: #111;
  font-size: 6px;
}
.board .etch {
  font-size: 9px;
}
.board .chip {
  font-size: 11px;
  fill: #ccc;
}
</style>
